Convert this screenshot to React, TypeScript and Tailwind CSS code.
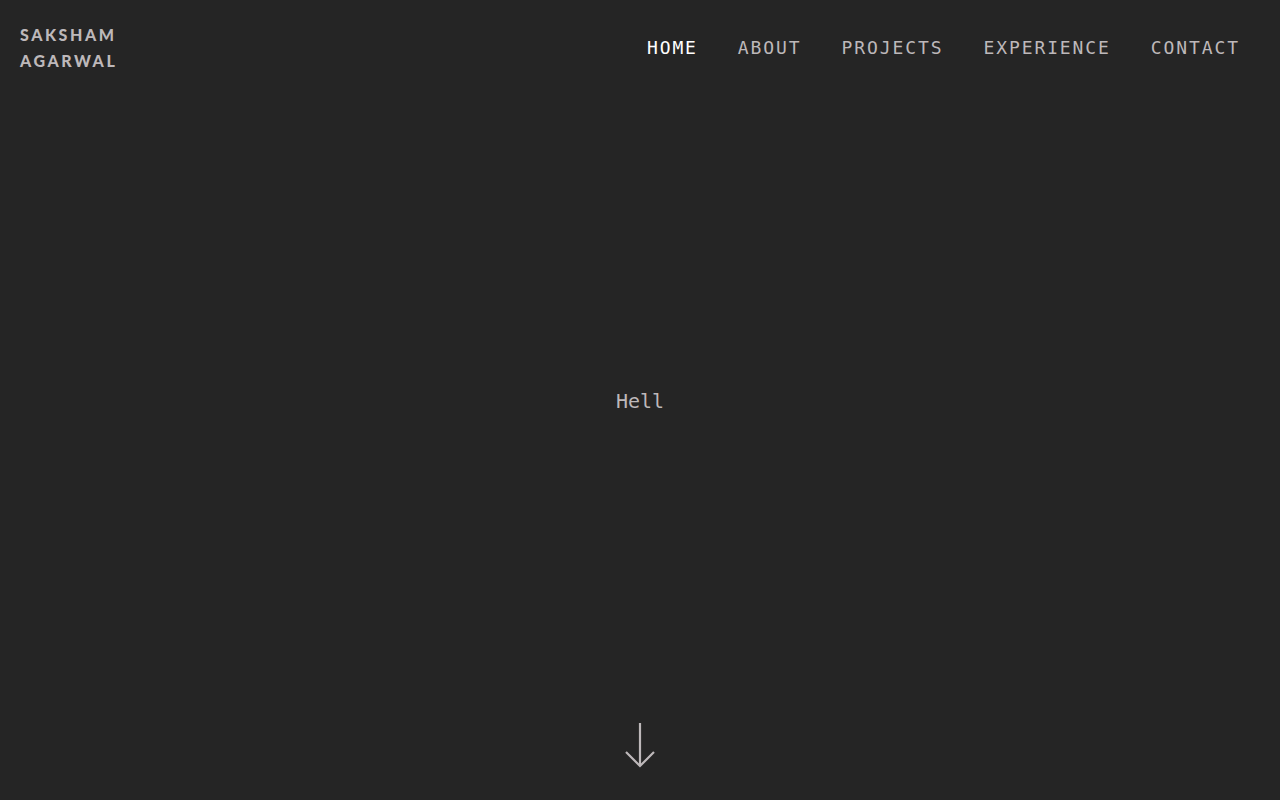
import React from 'react';

const links = ['HOME', 'ABOUT', 'PROJECTS', 'EXPERIENCE', 'CONTACT'];

const App: React.FC = () => {
  return (
    <div className="h-screen w-full bg-[#252525] flex flex-col overflow-hidden">
      {/* top bar */}
      <header className="flex justify-between items-start pl-5 pr-10 pt-[22px]">
        <div className="font-['Lato',sans-serif] font-black text-[16px] leading-[26px] tracking-[0.16em] text-[#bdb8ba]">
          <div>SAKSHAM</div>
          <div>AGARWAL</div>
        </div>
        <nav className="flex gap-10 pt-[14px] font-['DejaVu_Sans_Mono',monospace] text-[18px] leading-6 tracking-[1.9px]">
          {links.map((l, i) => (
            <a key={l} href="#" className={i === 0 ? 'text-white' : 'text-[#bdb8ba]'}>
              {l}
            </a>
          ))}
        </nav>
      </header>

      {/* hero */}
      <main className="flex-1 flex items-center justify-center">
        <p className="font-['DejaVu_Sans_Mono',monospace] text-[20px] text-[#bdb8ba] mt-[6px]">Hell</p>
      </main>

      {/* scroll arrow */}
      <div className="flex justify-center pb-8">
        <svg width="32" height="46" viewBox="0 0 32 46" fill="none" stroke="#bdb8ba" strokeWidth="2.2">
          <path d="M16 1v43" />
          <path d="M2 30l14 14 14-14" />
        </svg>
      </div>
    </div>
  );
};

export default App;
